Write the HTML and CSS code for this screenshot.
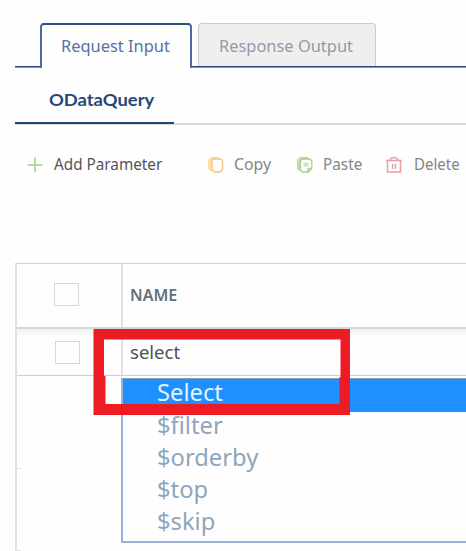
FILE: index.html
```html
<!DOCTYPE html>
<html lang="en">
<head>
<meta charset="utf-8">
<title>ODataQuery</title>
<link rel="stylesheet" href="styles.css">
</head>
<body>
<main class="page">
  <nav class="tabs">
    <div class="tab active"><span>Request Input</span></div>
    <div class="tab"><span>Response Output</span></div>
  </nav>
  <div class="subtabs"><div class="subtab"><span>ODataQuery</span></div></div>
  <div class="toolbar">
    <div class="tool add">
      <svg width="16" height="16" viewBox="0 0 16 16"><path d="M8 .8v14.4M.5 8h15" stroke="#a3d189" stroke-width="1.6"/></svg>
      <span>Add Parameter</span>
    </div>
    <div class="tool copy">
      <svg width="18" height="18" viewBox="0 0 18 18" fill="none" stroke-width="1.5"><path d="M4.500 15 1.500 13V3.500l2.500-2h8L5 3.500 3.500 5v8z" fill="#fde3b8" stroke="#fcdca6" stroke-width="1"/><path d="M6.500 3h7l2 2v8.500l-2.500 2.500H7.500L5 13.500V4.700z" stroke="#f7c08c"/></svg>
      <span>Copy</span>
    </div>
    <div class="tool paste">
      <svg width="18" height="18" viewBox="0 0 18 18" fill="none" stroke="#a4d18b" stroke-width="1.3"><path d="M4 15 1.500 13.500V3.500l2.500-2h8L5 3.500 3.500 5v8z" fill="#c4e2b5" stroke="#b5daa1" stroke-width="1"/><path d="M6.300 3h7.500l2 2v7.500l-3.500 3.500H6.500l-2-2V5zM12 16v-3.500h4"/><path d="M7.500 7.500h5M7.500 9.500h5" stroke="#bddcae"/></svg>
      <span>Paste</span>
    </div>
    <div class="tool delete">
      <svg width="18" height="18" viewBox="0 0 18 18" fill="none" stroke="#e8a0a3" stroke-width="1.5"><path d="M1 4.500h16M4.800 4.200 6 2.300l3-1 3 1 1.200 1.900M2.500 5v11h13V5"/><path d="M7.600 8v5M10.400 8v5"/></svg>
      <span>Delete</span>
    </div>
  </div>
  <section class="grid">
    <div class="row head">
      <div class="cell check"><i class="box"></i></div>
      <div class="cell name"><span>NAME</span></div>
    </div>
    <div class="row item">
      <div class="cell check"><i class="box"></i></div>
      <div class="cell name"><span>select</span></div>
    </div>
    <div class="rest">
      <div class="gutter"><i></i><i></i></div>
      <div class="options">
        <div class="option chosen"><span>Select</span></div>
        <div class="option"><span>$filter</span></div>
        <div class="option"><span>$orderby</span></div>
        <div class="option"><span>$top</span></div>
        <div class="option"><span>$skip</span></div>
      </div>
    </div>
  </section>
  <svg class="highlight" width="258" height="87" viewBox="0 0 258 87"><path d="M.5 0H257v86H.5zM11 10.500V47h1.500v28H246.500V48h1V10.500z" fill="#ed1c24" fill-rule="evenodd"/></svg>
</main>
</body>
</html>
```
FILE: styles.css
```css
* { box-sizing: border-box; }
body { margin: 0; background: #fefefe; font-family: "Noto Sans", sans-serif; overflow: hidden; }
.page { position: relative; width: 466px; height: 551px; padding: 23px 0 0 15px; overflow: hidden; }
span { display: inline-block; white-space: nowrap; transform-origin: 0 50%; }
svg { display: block; flex: none; }

.tabs { display: flex; gap: 6px; height: 45px; padding-left: 25px; background: linear-gradient(#234a86 50%, #7f9ac0 50%) 0 100% / 100% 2px no-repeat; }
.tab { width: 178px; height: 43px; padding: 10px 0 0 20px; border: 1.5px solid #cbcbcb; border-bottom: 0; border-radius: 4px 4px 0 0; background: #efefef; color: #919ba6; font-size: 16.5px; line-height: 24px; }
.tab span { transform: scaleX(.995); }
.tab.active { width: 152px; height: 45px; border: 2px solid #4a6c9f; border-top-color: #294f88; border-bottom: 0; background: #fefefe; color: #5671a0; padding: 9px 0 0 19px; }

.subtabs { height: 57px; background: linear-gradient(#d9dbdb, #d9dbdb) 0 100% / 100% 2px no-repeat; }
.subtab { width: 159px; height: 56px; border-bottom: 2px solid #244779; padding: 20px 0 0 34px; font: 700 17.5px/24px Lato, sans-serif; color: #264778; }
.subtab span { transform: scaleX(1.05); }

.toolbar { display: flex; height: 79px; align-items: center; color: #858585; font-size: 16px; line-height: 22px; }
.tool { display: flex; align-items: center; flex: none; }
.tool span { transform: translateY(-1px) scaleX(.99); }
.add { width: 192px; padding-left: 12px; gap: 11px; color: #555; }
.add span { transform: translateY(-1px) scaleX(.955); }
.copy { width: 89px; gap: 9px; }
.paste { width: 89px; gap: 9px; }
.paste span { transform: translateY(-1px) scaleX(.955); }
.delete { gap: 11px; }
.delete span { transform: translateY(-1px) scaleX(.94); }

.grid { margin-top: 59px; height: 288px; border-left: 2px solid #e1e1e1; border-top: 1.5px solid #d2d2d2; }
.row { display: flex; }
.head { height: 65px; border-bottom: 2px solid #d7d7d7; }
.item { height: 47px; border-bottom: 1.5px solid #cecece; background: linear-gradient(#f3f3f3, #fefefe 9px); }
.cell { display: flex; align-items: center; }
.check { width: 106px; padding-left: 37px; border-right: 2px solid #e1e1e1; }
.item .check { padding-left: 38px; }
.box { width: 25px; height: 23px; border: 1.5px solid #d8d8d8; background: #fefefe; }
.head .box { margin-bottom: 2px; }
.name { flex: 1; padding-left: 7px; font-size: 18px; color: #505050; }
.name span { transform: scaleX(1.03); }
.head .name { font-size: 16px; font-weight: 600; color: #65707b; }
.head .name span { transform: translateY(-1px) scaleX(1); }
.rest { display: flex; height: 174px; }
.gutter { width: 104px; padding-top: 92px; }
.gutter i { display: block; width: 4px; height: 82px; border-top: 1px solid #e3e3e3; }
.options { flex: 1; height: 165px; margin-top: 2px; border: 2px solid #9ab1da; border-top: 1.5px solid #8a9abf; border-right: 0; background: #fefefe; color: #8fa5bd; font-size: 23.5px; line-height: 26px; }
.option { height: 32px; padding-left: 34px; }
.option span { transform: scaleX(1.01); }
.option.chosen { height: 33px; color: #e4f2ff; background: #1e90ff; line-height: 27px; }

.highlight { position: absolute; left: 93px; top: 329px; }
```
